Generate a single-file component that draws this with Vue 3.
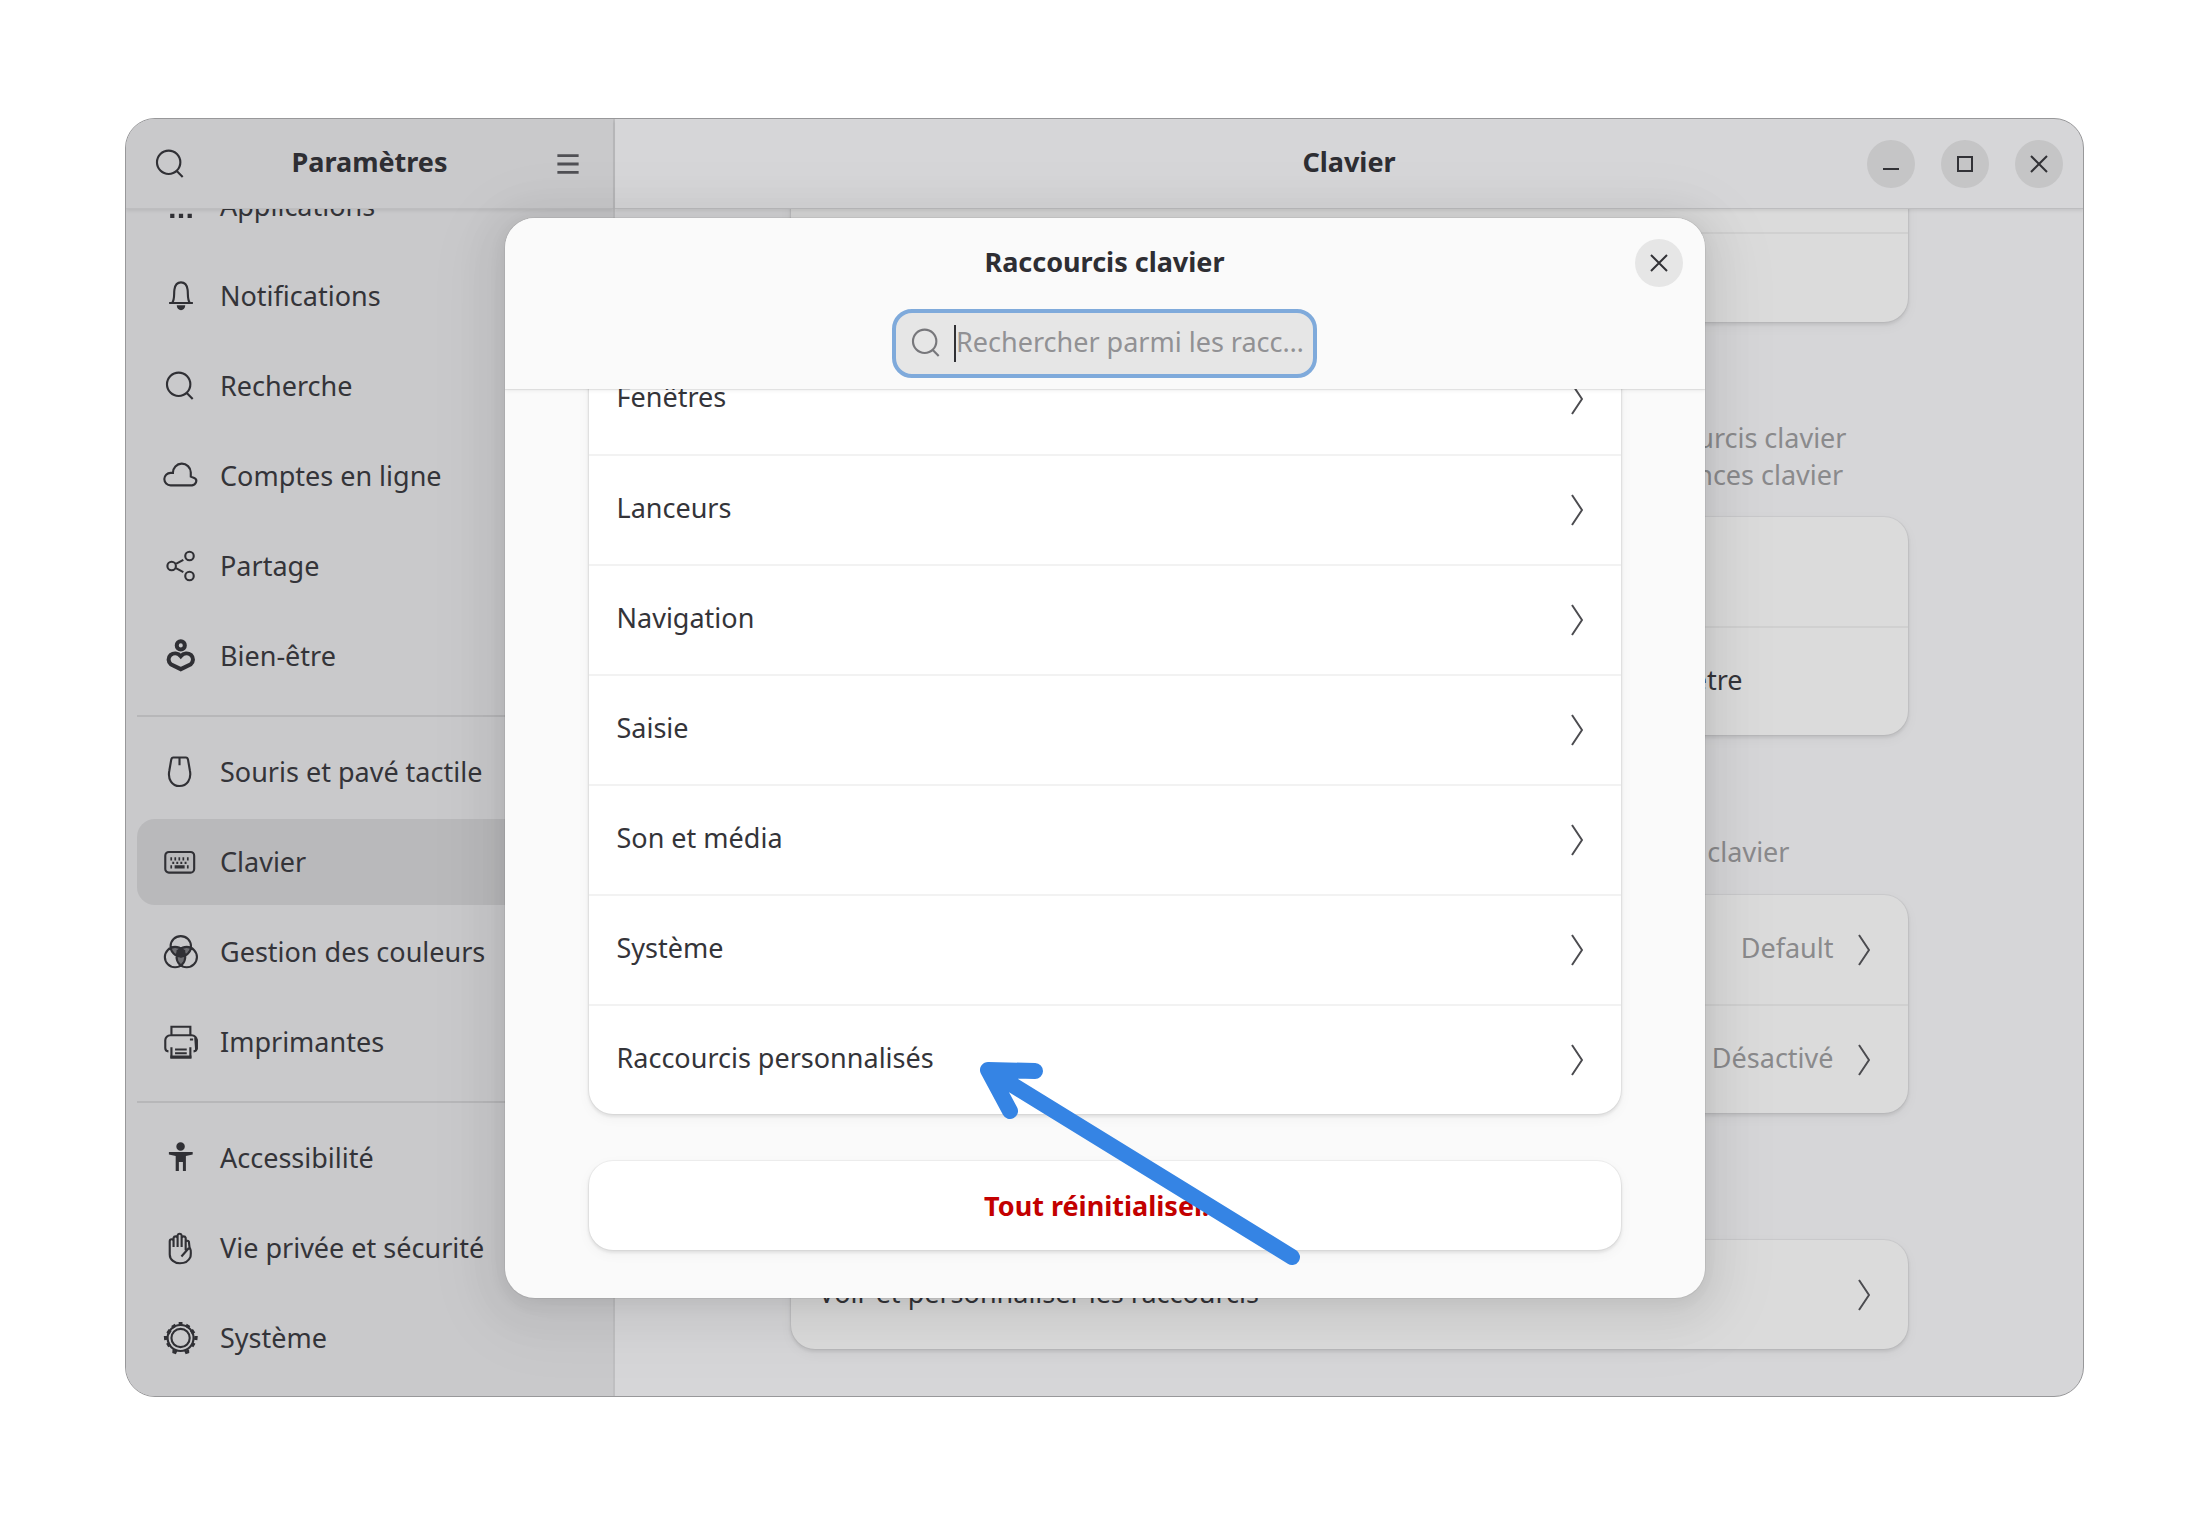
<template>
  <div class="desktop">
    <div class="window">
      <aside class="sidebar">
        <header class="bar">
          <button class="icon-btn" aria-label="Rechercher">
            <svg class="icon" viewBox="0 0 16 16"><path :d="icons.search" /></svg>
          </button>
          <h1 class="title">Paramètres</h1>
          <button class="icon-btn" aria-label="Menu principal">
            <svg class="icon menu" viewBox="0 0 16 16"><path d="M3 4.1h10M3 8h10M3 11.9h10" /></svg>
          </button>
        </header>

        <nav class="nav">
          <template v-for="(group, index) in groups" :key="index">
            <hr v-if="index > 0" class="divider" />
            <a
              v-for="item in group"
              :key="item.label"
              href="#"
              class="nav-item"
              :class="{ active: item.label === current }"
              @click.prevent="current = item.label"
            >
              <svg class="icon" viewBox="0 0 16 16">
                <path v-if="icons[item.icon]" :d="icons[item.icon]" :stroke-width="item.stroke" />
                <path v-if="fills[item.icon]" class="solid" :d="fills[item.icon]" />
                <path v-if="shades[item.icon]" class="shade" :d="shades[item.icon]" />
              </svg>
              <span>{{ item.label }}</span>
            </a>
          </template>
        </nav>
      </aside>

      <main class="content">
        <header class="bar">
          <h2 class="title">Clavier</h2>
          <div class="controls">
            <button class="round" aria-label="Réduire">
              <svg class="glyph" viewBox="0 0 16 16"><path d="M0 13h16" /></svg>
            </button>
            <button class="round" aria-label="Agrandir">
              <svg class="glyph" viewBox="0 0 16 16"><path d="M1 1h14v14H1z" /></svg>
            </button>
            <button class="round" aria-label="Fermer">
              <svg class="glyph" viewBox="0 0 16 16"><path d="M0 0l16 16M16 0L0 16" /></svg>
            </button>
          </div>
        </header>

        <div class="panel">
          <section class="card">
            <div class="row"></div>
            <div class="row short"></div>
          </section>

          <p class="hint switching">des raccourcis clavier<br />les séquences clavier</p>
          <section class="card">
            <div class="row"></div>
            <div class="row window-source"><span class="label">fenêtre</span></div>
          </section>

          <p class="hint special">clavier</p>
          <section class="card">
            <button v-for="value in ['Default', 'Désactivé']" :key="value" class="row">
              <span class="label value">{{ value }}</span>
              <svg class="chevron" viewBox="0 0 12 32"><path d="M1 1l10 15L1 31" /></svg>
            </button>
          </section>

          <section class="card shortcuts">
            <button class="row">
              <span class="label">Voir et personnaliser les raccourcis</span>
              <svg class="chevron" viewBox="0 0 12 32"><path d="M1 1l10 15L1 31" /></svg>
            </button>
          </section>
        </div>
      </main>

      <div class="overlay">
        <div class="dialog-frame">
          <div class="dialog" role="dialog" aria-labelledby="dialog-title">
            <header class="dialog-head">
              <div class="dialog-bar">
                <h2 id="dialog-title" class="title">Raccourcis clavier</h2>
                <button class="round light" aria-label="Fermer">
                  <svg class="glyph" viewBox="0 0 16 16"><path d="M0 0l16 16M16 0L0 16" /></svg>
                </button>
              </div>
              <label class="search">
                <svg class="icon" viewBox="0 0 16 16"><path :d="icons.search" /></svg>
                <span class="caret"></span>
                <input
                  v-model="query"
                  type="text"
                  aria-label="Rechercher parmi les raccourcis"
                  placeholder="Rechercher parmi les racc…"
                />
              </label>
            </header>

            <div class="dialog-body">
              <section class="card white">
                <button v-for="section in sections" :key="section" class="row">
                  <span class="label">{{ section }}</span>
                  <svg class="chevron" viewBox="0 0 12 32"><path d="M1 1l10 15L1 31" /></svg>
                </button>
              </section>
              <button class="card white reset"><span class="label">Tout réinitialiser…</span></button>
            </div>
          </div>

          <svg class="arrow" viewBox="0 0 324 208">
            <path d="M314 197L10 10M57 11L10 10L32 51" />
          </svg>
        </div>
      </div>
    </div>
  </div>
</template>

<script setup>
import { ref } from 'vue'

const current = ref('Clavier')
const query = ref('')

const groups = [
  [
    { label: 'Applications', icon: 'apps' },
    { label: 'Notifications', icon: 'bell' },
    { label: 'Recherche', icon: 'search' },
    { label: 'Comptes en ligne', icon: 'cloud' },
    { label: 'Partage', icon: 'share' },
    { label: 'Bien-être', icon: 'wellbeing', stroke: 1.9 }
  ],
  [
    { label: 'Souris et pavé tactile', icon: 'mouse' },
    { label: 'Clavier', icon: 'keyboard' },
    { label: 'Gestion des couleurs', icon: 'color', stroke: 1 },
    { label: 'Imprimantes', icon: 'printer' }
  ],
  [
    { label: 'Accessibilité', icon: 'access' },
    { label: 'Vie privée et sécurité', icon: 'hand', stroke: 1 },
    { label: 'Système', icon: 'gear', stroke: 1 }
  ]
]

const sections = [
  'Fenêtres',
  'Lanceurs',
  'Navigation',
  'Saisie',
  'Son et média',
  'Système',
  'Raccourcis personnalisés'
]

// outlined shapes
const icons = {
  search: 'M12.4 7.2a5.5 5.5 0 1 1-11 0a5.5 5.5 0 1 1 11 0zM10.6 11.2l2.9 2.9',
  bell: 'M2.4 11.3h11.2M3.9 11.2C5.1 9.3 4.6 7.1 4.9 5C5.2 2.9 6.2 1.6 8 1.6s2.8 1.3 3.1 3.4c.3 2.1-.2 4.3 1 6.2',
  cloud: 'M3.1 12.4a2.7 2.7 0 0 1 0-5.9h1.1a4.2 4.2 0 0 1 8.4-.2v2l1.6.6q1.400.700.900 2t-1.900 1.500z',
  share: 'M5.6 8a2 2 0 1 1-4 0a2 2 0 1 1 4 0zM14 3.3a2 2 0 1 1-4 0a2 2 0 1 1 4 0zM14 12.7a2 2 0 1 1-4 0a2 2 0 1 1 4 0zM5.4 7.1l3.7-2M5.4 8.9l3.7 2',
  wellbeing: 'M9.8 3a1.9 1.9 0 1 1-3.8 0a1.9 1.9 0 1 1 3.8 0zM7.9 8.1C6.6 6.6 4.5 6.5 3 7.6C1.8 8.7 1.9 10.8 3.2 11.9L7.9 14.2l4.7-2.3c1.3-1.1 1.4-3.2.2-4.3C11.3 6.500 9.200 6.600 7.900 8.100z',
  mouse: 'M4.4 1.2h5.9c.7 0 .9.5 1 1l.9 5.2c.8 4-1.4 7.2-4.900 7.200S1.700 11.400 2.500 7.400l.9-5.200c.1-.5.3-1 1-1zM7.300 1.200v3.600',
  keyboard: 'M2.3 3.3h10.2a1.7 1.7 0 0 1 1.7 1.7v6.300a1.700 1.700 0 0 1-1.700 1.700H2.300a1.700 1.700 0 0 1-1.700-1.700V5A1.700 1.700 0 0 1 2.300 3.300z',
  color: 'M12.7 5.300a4.800 4.800 0 1 1-9.600 0a4.800 4.800 0 1 1 9.600 0zM10 10.400a4.800 4.800 0 1 1-9.600 0a4.800 4.800 0 1 1 9.600 0zM15.500 10.400a4.800 4.800 0 1 1-9.600 0a4.800 4.800 0 1 1 9.600 0z',
  printer: 'M3.500 4.500V.8h8.900v3.700M2.100 12.400a1.600 1.600 0 0 1-1.500-1.600V7.200a2.400 2.400 0 0 1 2.400-2.400h10a2.400 2.400 0 0 1 2.400 2.400v3.600a1.600 1.600 0 0 1-1.500 1.600M3.500 10.500v4.800h8.900v-4.800M5.200 11.500h5.500M5.200 13.300h5.500',
  hand: 'M2.700 11V4.800a.9.9 0 0 1 1.800 0V3.200a1 1 0 0 1 1.900 0V2a1 1 0 0 1 1.900 0v1.200a1 1 0 0 1 1.900 0V9M10.200 5a.9.9 0 0 1 1.500 0c.2 1 .1 3 .7 3.500c.4.5.2 3 0 3.800c-.8 1.800-2.500 2.900-4.900 2.900s-4.800-1.700-4.800-4.200M4.500 4.800v2.700M6.400 3.200v4.300M8.300 3.200v4.300M8.200 12l3.500-4',
  gear: 'M13.9 8a6.100 6.100 0 1 1-12.200 0a6.100 6.100 0 1 1 12.200 0zM12.100 8a4.300 4.300 0 1 1-8.600 0a4.300 4.300 0 1 1 8.600 0z'
}

// solid details
const fills = {
  apps: 'M2.9 11.700h2v2h-2zM7 11.700h2v2H7zM11.100 11.700h2v2h-2z',
  bell: 'M6 12.4h4a2 2.300 0 0 1-4 0z',
  keyboard: 'M3 5.800h.8v1.500H3zM4.900 5.800h.8v1.500h-.8zM6.800 5.800h.8v1.500h-.8zM8.700 5.800h.8v1.500h-.8zM10.800 5.800h.8v1.500h-.8zM3.900 7.900h.9v1h-.9zM5.800 7.900h.9v1h-.9zM7.700 7.900h.9v1h-.9zM9.700 7.900h.9v1h-.9zM3 9.500h.8V11H3zM5 9.500h4.700V11H5zM10.800 9.500h.8V11h-.8z',
  color: 'M5.900 7.200L8 6l2 1.200v2.600L8 10.700L5.900 9.800z',
  printer: 'M3 14.300h9.900v1.500H3zM12.200 6.400h1.500v.9h-1.500zM14.200 5.800l1.700 1v4.500l-1.200 1.200z',
  access: 'M9.800 2.600a2 2 0 1 1-4 0a2 2 0 1 1 4 0zM2.300 5.200h11.200v1.100l-3.200.7v7.100H8.900v-4.200H7v4.200H5.500V7l-3.200-.7z',
  gear: 'M6.900.5h1.800v1.600H6.900zM10.700 1.300l1.700 1l-.8 1.400l-1.600-1zM13.600 3.800l1.100 1.600l-1.500.9l-1-1.600zM14.300 7l1.600.1l-.2 1.900l-1.600-.2zM14.800 10.700l-1 1.700l-1.400-.9l1-1.600zM11.800 13.400l.1 1.700l-1.700.6l-.7-1.600zM4 13.400l-.1 1.700l1.700.6l.7-1.600zM1 10.700l1 1.700l1.400-.9l-1-1.600zM1.500 7L-.1 7.100L.1 9l1.600-.2zM2.200 3.800L1.100 5.400l1.500.9l1-1.600zM5.100 1.300l-1.700 1l.8 1.400l1.600-1z'
}

// half-tone areas where the colour discs overlap
const shades = {
  color: 'M3.4 5.900C5 5 7 5.500 7.900 6.700C8.900 5.500 11 5 12.500 5.900C12 8 11.300 9.100 9.800 9.700c.2 2-.6 3.900-1.900 4.900C6.600 13.600 5.900 11.700 6 9.700C4.600 9.100 3.800 8 3.400 5.900z'
}
</script>

<style>
body {
  margin: 0;
  background: #ffffff;
}
</style>

<style scoped>
.desktop {
  box-sizing: border-box;
  height: 100vh;
  padding: 118px 124px 134px 125px;
  font-family: "Noto Sans", sans-serif;
  font-size: 27px;
  line-height: 37px;
  color: #343439;
}

.window {
  position: relative;
  box-sizing: border-box;
  display: flex;
  height: 100%;
  overflow: hidden;
  border: 1px solid #98989a;
  border-radius: 30px;
  background: #d6d6d8;
}

button {
  margin: 0;
  padding: 0;
  border: none;
  background: none;
  color: inherit;
  font: inherit;
  text-align: left;
}

.title {
  margin: 0;
  padding-bottom: 4px;
  font-size: 27px;
  font-weight: 700;
  color: #2e2e33;
}

.icon {
  display: block;
  flex: none;
  width: 34px;
  height: 34px;
  overflow: visible;
  fill: none;
  stroke: #303035;
  stroke-width: 1;
}

.icon .solid {
  fill: #303035;
  stroke: none;
}

.icon .shade {
  fill: rgba(48, 48, 53, 0.6);
  stroke: none;
}

.icon.menu {
  stroke: #505055;
  stroke-width: 1.3;
}

.bar {
  position: relative;
  z-index: 1;
  box-sizing: border-box;
  display: flex;
  flex: none;
  align-items: center;
  height: 90px;
  border-bottom: 1px solid #bdbdbf;
  box-shadow: 0 2px 3px rgba(0, 0, 0, 0.08);
}

.sidebar {
  box-sizing: border-box;
  display: flex;
  flex: none;
  flex-direction: column;
  width: 489px;
  border-right: 2px solid #bfbfc1;
  background: #c9c9cb;
}

.sidebar .bar {
  justify-content: space-between;
  padding: 0 28px;
}

.nav {
  display: flex;
  flex: 1;
  flex-direction: column;
  justify-content: flex-end;
  gap: 4px;
  min-height: 0;
  overflow: hidden;
  padding: 0 11px 15px;
}

.nav-item {
  display: flex;
  flex: none;
  align-items: center;
  gap: 22px;
  height: 86px;
  padding-left: 27px;
  border-radius: 18px;
  color: inherit;
  text-decoration: none;
}

.nav-item span {
  padding-bottom: 2px;
}

.nav-item.active {
  background: #b9b9bb;
}

.divider {
  flex: none;
  width: 100%;
  height: 2px;
  margin: 12px 0 8px;
  border: none;
  background: #b7b7b9;
}

.content {
  display: flex;
  flex: 1;
  flex-direction: column;
  min-width: 0;
}

.content .bar {
  display: grid;
  grid-template-columns: 1fr auto 1fr;
  padding: 0 20px;
}

.content .title {
  grid-column: 2;
}

.controls {
  display: flex;
  justify-content: flex-end;
  gap: 26px;
}

.round {
  display: flex;
  align-items: center;
  justify-content: center;
  width: 48px;
  height: 48px;
  border-radius: 50%;
  background: #c5c5c6;
}

.round.light {
  background: #e6e6e6;
}

.glyph {
  width: 16px;
  height: 16px;
  fill: none;
  stroke: #323236;
  stroke-width: 2;
  overflow: visible;
}

.panel {
  box-sizing: border-box;
  display: flex;
  flex: 1;
  flex-direction: column;
  justify-content: flex-end;
  align-self: center;
  width: 100%;
  max-width: 1117px;
  min-height: 0;
  padding-bottom: 47px;
  clip-path: inset(0 -20px);
}

.card {
  flex: none;
  border-radius: 24px;
  background: #dbdbdb;
  box-shadow: 0 0 0 1px rgba(0, 0, 0, 0.04), 0 2px 3px 1px rgba(0, 0, 0, 0.08), 0 4px 12px 2px rgba(0, 0, 0, 0.03);
}

.card.white {
  background: #ffffff;
}

.row {
  box-sizing: border-box;
  display: flex;
  align-items: center;
  justify-content: space-between;
  width: 100%;
  height: 109px;
  padding: 0 38px 0 28px;
}

.row + .row {
  border-top: 2px solid #d0d0d0;
}

.row.short {
  height: 90px;
}

.label {
  padding-bottom: 5px;
}

.value {
  margin-left: auto;
  margin-right: 24px;
  color: #8a8a8c;
}

.window-source {
  justify-content: flex-end;
  padding-right: 165px;
}

.chevron {
  flex: none;
  width: 12px;
  height: 32px;
  fill: none;
  stroke: #4c4c50;
  stroke-width: 2;
}

.hint {
  flex: none;
  margin: 0 0 0 auto;
  color: #8a8a8c;
}

.switching {
  padding: 97px 61px 24px 0;
}

.special {
  padding: 98px 118px 25px 0;
}

.shortcuts {
  margin-top: 127px;
}

.overlay {
  position: absolute;
  inset: 0;
  z-index: 2;
  display: flex;
  align-items: center;
  justify-content: center;
}

.dialog-frame {
  position: relative;
  width: 1200px;
  max-width: 90%;
  height: 1080px;
  max-height: 90%;
}

.dialog {
  display: flex;
  flex-direction: column;
  height: 100%;
  overflow: hidden;
  border-radius: 30px;
  background: #fafafa;
  box-shadow: 0 0 0 1px rgba(0, 0, 0, 0.05), 0 4px 16px 2px rgba(0, 0, 0, 0.06), 0 6px 40px 16px rgba(0, 0, 0, 0.05), 0 12px 64px 32px rgba(0, 0, 0, 0.03);
}

.dialog-head {
  position: relative;
  z-index: 1;
  display: flex;
  flex: none;
  flex-direction: column;
  align-items: center;
  padding-bottom: 11px;
  background: #fafafa;
  box-shadow: 0 1px 1px rgba(0, 0, 0, 0.08), 0 2px 4px rgba(0, 0, 0, 0.05);
}

.dialog-bar {
  box-sizing: border-box;
  display: grid;
  grid-template-columns: 1fr auto 1fr;
  align-items: center;
  width: 100%;
  height: 91px;
  padding: 0 22px;
}

.dialog-bar .title {
  grid-column: 2;
}

.dialog-bar .round {
  justify-self: end;
}

.search {
  box-sizing: border-box;
  display: flex;
  align-items: center;
  width: 425px;
  height: 69px;
  padding: 0 8px 0 14px;
  border: 4px solid #7faadb;
  border-radius: 20px;
  background: #e6e6e6;
}

.search .icon {
  stroke: #77777b;
}

.caret {
  flex: none;
  width: 2px;
  height: 37px;
  margin-left: 10px;
  background: #303034;
}

.search input {
  flex: 1;
  min-width: 0;
  height: 37px;
  padding: 0 0 4px;
  border: none;
  outline: none;
  background: none;
  color: #303034;
  font: inherit;
  caret-color: transparent;
}

.search input::placeholder {
  color: #919194;
  opacity: 1;
}

.dialog-body {
  box-sizing: border-box;
  display: flex;
  flex: 1;
  flex-direction: column;
  justify-content: flex-end;
  gap: 47px;
  min-height: 0;
  overflow: hidden;
  padding: 0 84px 48px;
}

.white .row {
  height: 110px;
}

.white .row + .row {
  border-top-color: #f2f2f2;
}

.reset {
  height: 89px;
  color: #c30000;
  font-weight: 700;
  text-align: center;
}

.arrow {
  position: absolute;
  left: 473px;
  top: 842px;
  width: 324px;
  height: 208px;
  fill: none;
  stroke: #3584e4;
  stroke-width: 16;
  stroke-linecap: round;
  stroke-linejoin: round;
  pointer-events: none;
}
</style>
